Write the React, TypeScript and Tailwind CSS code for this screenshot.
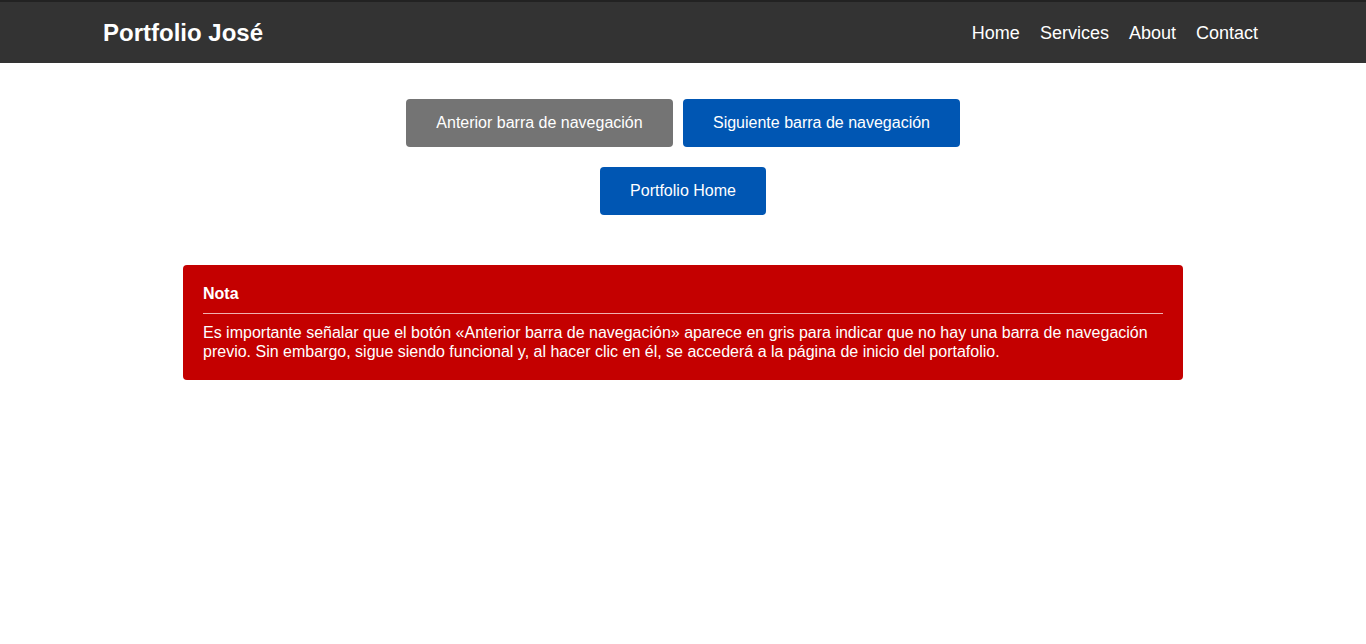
export default function App() {
  const font = { fontFamily: '"Liberation Sans", Arial, sans-serif' };
  return (
    <div className="min-h-screen bg-white" style={font}>
      <header className="h-[63px] bg-[#333333] border-t-2 border-[#222222]">
        <div className="mx-auto max-w-[1160px] h-full flex items-center justify-between">
          <div className="text-white text-[24px] font-bold leading-none">Portfolio José</div>
          <nav className="flex items-center gap-[20px] pr-[5px] text-white text-[18px] leading-none">
            <a>Home</a>
            <a>Services</a>
            <a>About</a>
            <a>Contact</a>
          </nav>
        </div>
      </header>
      <main className="flex flex-col items-center pt-[36px]">
        <div className="flex gap-[10px]">
          <button className="whitespace-nowrap bg-[#747474] text-white text-[16px] leading-[18px] py-[15px] rounded-[4px] w-[267px]">
            Anterior barra de navegación
          </button>
          <button className="whitespace-nowrap bg-[#0056b3] text-white text-[16px] leading-[18px] py-[15px] rounded-[4px] w-[277px]">
            Siguiente barra de navegación
          </button>
        </div>
        <button className="whitespace-nowrap mt-[20px] bg-[#0056b3] text-white text-[16px] leading-[18px] py-[15px] rounded-[4px] w-[166px]">
          Portfolio Home
        </button>
        <div className="mt-[50px] w-[1000px] bg-[#c40000] text-white rounded-[4px] px-[20px] pt-[20px] pb-[19px]">
          <div className="font-bold text-[16px] leading-[18px]">Nota</div>
          <div className="mt-[10px] mb-[9px] h-px bg-[#f0b0b0]" />
          <p className="text-[16px] leading-[19px]">
            Es importante señalar que el botón «Anterior barra de navegación» aparece en gris para indicar que no hay una barra de navegación previo. Sin embargo, sigue siendo funcional y, al hacer clic en él, se accederá a la página de inicio del portafolio.
          </p>
        </div>
      </main>
    </div>
  );
}
